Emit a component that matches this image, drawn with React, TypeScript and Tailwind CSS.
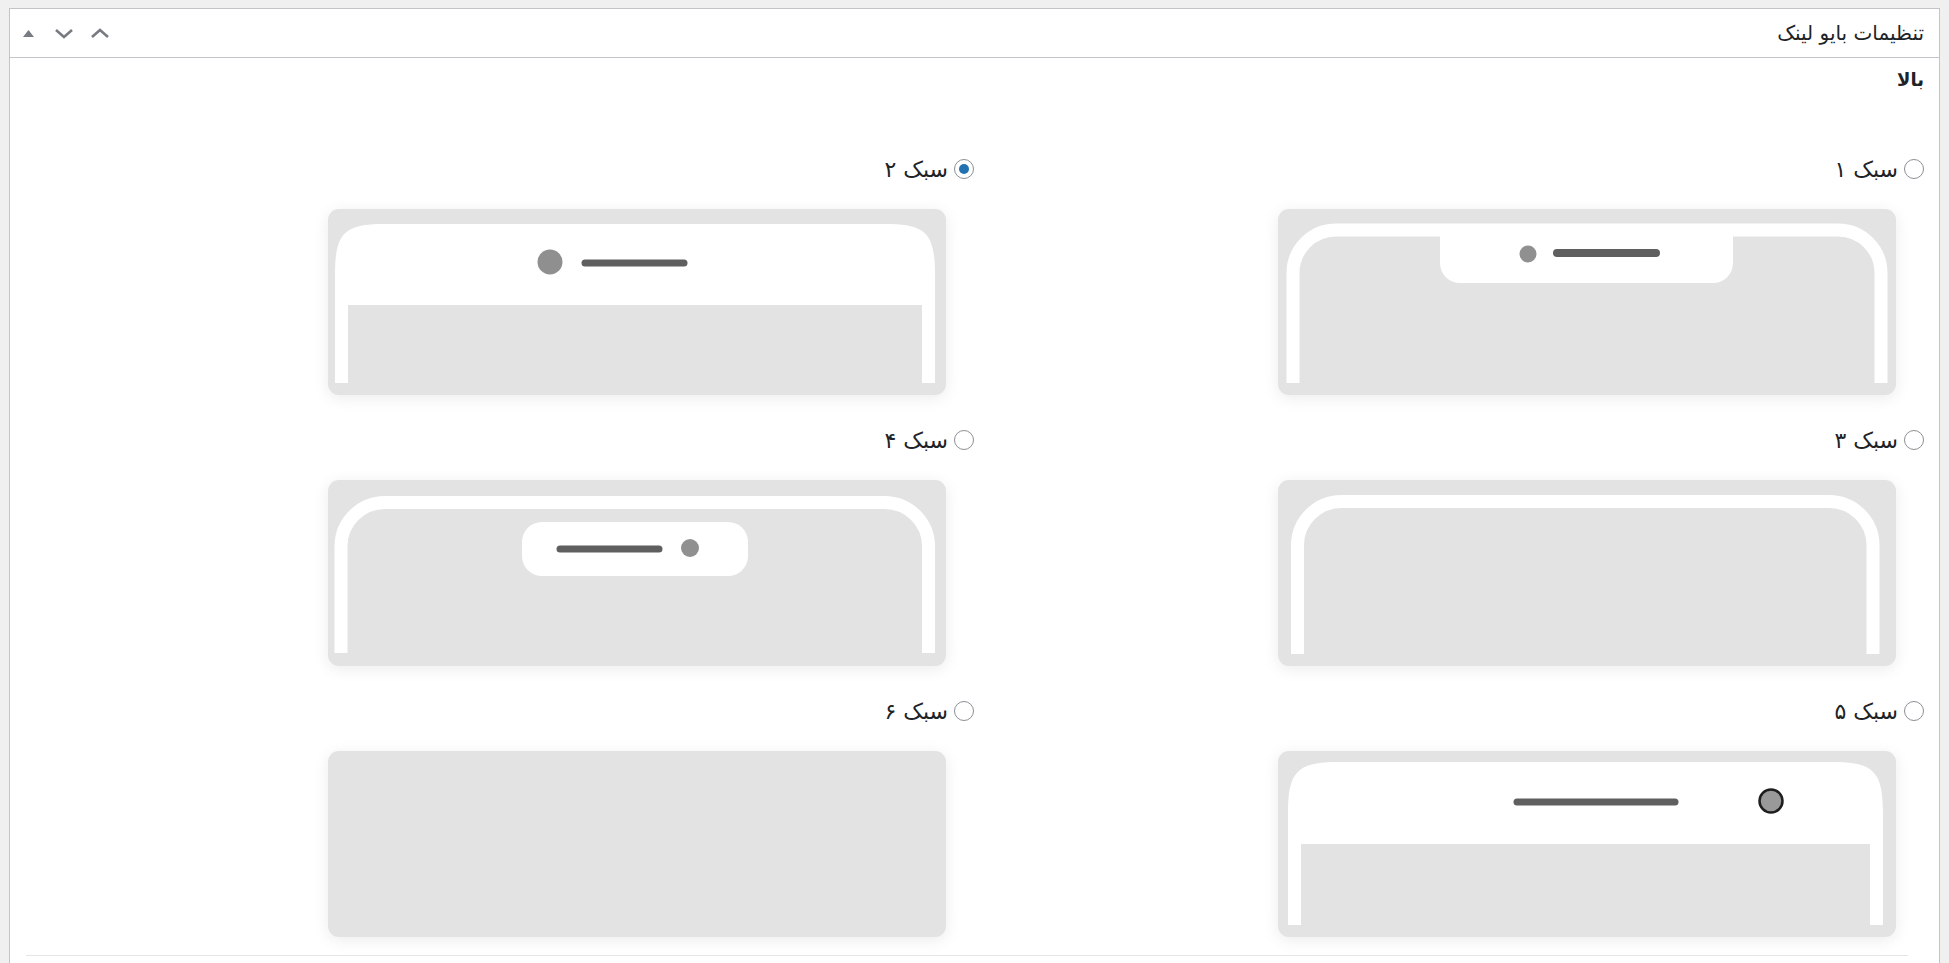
import React from 'react'

const styles = [
  { id: 1, label: 'سبک ۱' },
  { id: 2, label: 'سبک ۲' },
  { id: 3, label: 'سبک ۳' },
  { id: 4, label: 'سبک ۴' },
  { id: 5, label: 'سبک ۵' },
  { id: 6, label: 'سبک ۶' },
]

function Preview({ variant }: { variant: number }) {
  return (
    <div className="w-[618px] h-[186px] rounded-[11px] bg-[#e3e3e3] shadow-[0_3px_16px_rgba(0,0,0,0.08)] overflow-hidden">
      <svg width="618" height="186" viewBox="0 0 618 186" preserveAspectRatio="none">
        {variant === 1 && (
          <g>
            <path
              d="M15,174 V64 A43 43 0 0 1 58,21 H560 A43 43 0 0 1 603,64 V174"
              fill="none"
              stroke="#fff"
              strokeWidth="13"
            />
            <path d="M162,20 H455 V54 A20 20 0 0 1 435,74 H182 A20 20 0 0 1 162,54 Z" fill="#fff" />
            <circle cx="250" cy="45" r="8.5" fill="#909090" />
            <line x1="279" y1="44" x2="378" y2="44" stroke="#5f5f5f" strokeWidth="8" strokeLinecap="round" />
          </g>
        )}
        {variant === 2 && (
          <g>
            <path
              d="M7,174 V66 C7,24 16,15 57,15 H557 C598,15 607,24 607,66 V174 H594 V96 H20 V174 Z"
              fill="#fff"
            />
            <circle cx="222" cy="53" r="12.5" fill="#8f8f8f" />
            <line x1="257" y1="54" x2="356" y2="54" stroke="#5f5f5f" strokeWidth="7" strokeLinecap="round" />
          </g>
        )}
        {variant === 3 && (
          <path
            d="M19.5,174 V65 A44 44 0 0 1 63.5,21.5 H551 A44 44 0 0 1 595,65 V174"
            fill="none"
            stroke="#fff"
            strokeWidth="13"
          />
        )}
        {variant === 4 && (
          <g>
            <path
              d="M13,173 V66 A44 44 0 0 1 57,22.5 H556.5 A44 44 0 0 1 600.5,66 V173"
              fill="none"
              stroke="#fff"
              strokeWidth="13"
            />
            <rect x="194" y="42" width="226" height="54" rx="20" fill="#fff" />
            <line x1="232" y1="69" x2="331" y2="69" stroke="#5f5f5f" strokeWidth="7" strokeLinecap="round" />
            <circle cx="362" cy="68" r="9" fill="#909090" />
          </g>
        )}
        {variant === 5 && (
          <g>
            <path
              d="M10,174 V62 C10,21 19,11 60,11 H555 C596,11 605,21 605,62 V174 H592 V93 H23 V174 Z"
              fill="#fff"
            />
            <line x1="239" y1="51" x2="397" y2="51" stroke="#5f5f5f" strokeWidth="7" strokeLinecap="round" />
            <circle cx="493" cy="50" r="11.5" fill="#999" stroke="#1e1e1e" strokeWidth="2.5" />
          </g>
        )}
      </svg>
    </div>
  )
}

function Radio({ checked }: { checked?: boolean }) {
  return (
    <span className="w-[20px] h-[20px] rounded-full border border-[#8c8f94] bg-white flex items-center justify-center shrink-0">
      {checked && <span className="w-[10px] h-[10px] rounded-full bg-[#2271b1]" />}
    </span>
  )
}

export default function App() {
  return (
    <div
      className="min-h-screen bg-[#f0f0f1] pt-[8px] px-[9px] overflow-hidden"
      style={{ fontFamily: '"DejaVu Sans", sans-serif' }}
    >
      <div dir="rtl" className="bg-white border border-[#c3c4c7] pb-[60px]">
        <header className="h-[49px] border-b border-[#c3c4c7] flex items-center justify-between pr-[15px]">
          <h2 className="text-[20px] text-[#1d2327]">تنظیمات بایو لینک</h2>
          <div dir="ltr" className="flex items-center h-full">
            <button className="w-[36px] h-full flex items-center justify-center">
              <svg width="11" height="7" viewBox="0 0 11 7">
                <path d="M0,7 L5.5,0 L11,7 Z" fill="#787c82" />
              </svg>
            </button>
            <button className="w-[36px] h-full flex items-center justify-center">
              <svg width="20" height="11" viewBox="0 0 20 11">
                <path d="M2,2 L10,9 L18,2" fill="none" stroke="#787c82" strokeWidth="2.6" />
              </svg>
            </button>
            <button className="w-[36px] h-full flex items-center justify-center">
              <svg width="20" height="11" viewBox="0 0 20 11">
                <path d="M2,9 L10,2 L18,9" fill="none" stroke="#787c82" strokeWidth="2.6" />
              </svg>
            </button>
          </div>
        </header>

        <section className="pt-[9px]">
          <h3 className="px-[15px] text-[18px] font-bold text-[#1d2327] leading-[26px]">بالا</h3>
          <div className="px-[15px] grid grid-cols-[950px_952px] gap-y-[31px] mt-[62px] pb-[18px]">
            {styles.map((s) => (
              <div key={s.id} className="flex flex-col items-start">
                <label className="h-[28px] flex items-center gap-[6px] text-[22px] text-[#1d2327]">
                  <Radio checked={s.id === 2} />
                  <span>{s.label}</span>
                </label>
                <div className="mt-[26px] mr-[28px]">
                  <Preview variant={s.id} />
                </div>
              </div>
            ))}
          </div>
          <div className="mr-[31px] ml-[16px] border-b border-[#e5e5e5]" />
        </section>
      </div>
    </div>
  )
}
